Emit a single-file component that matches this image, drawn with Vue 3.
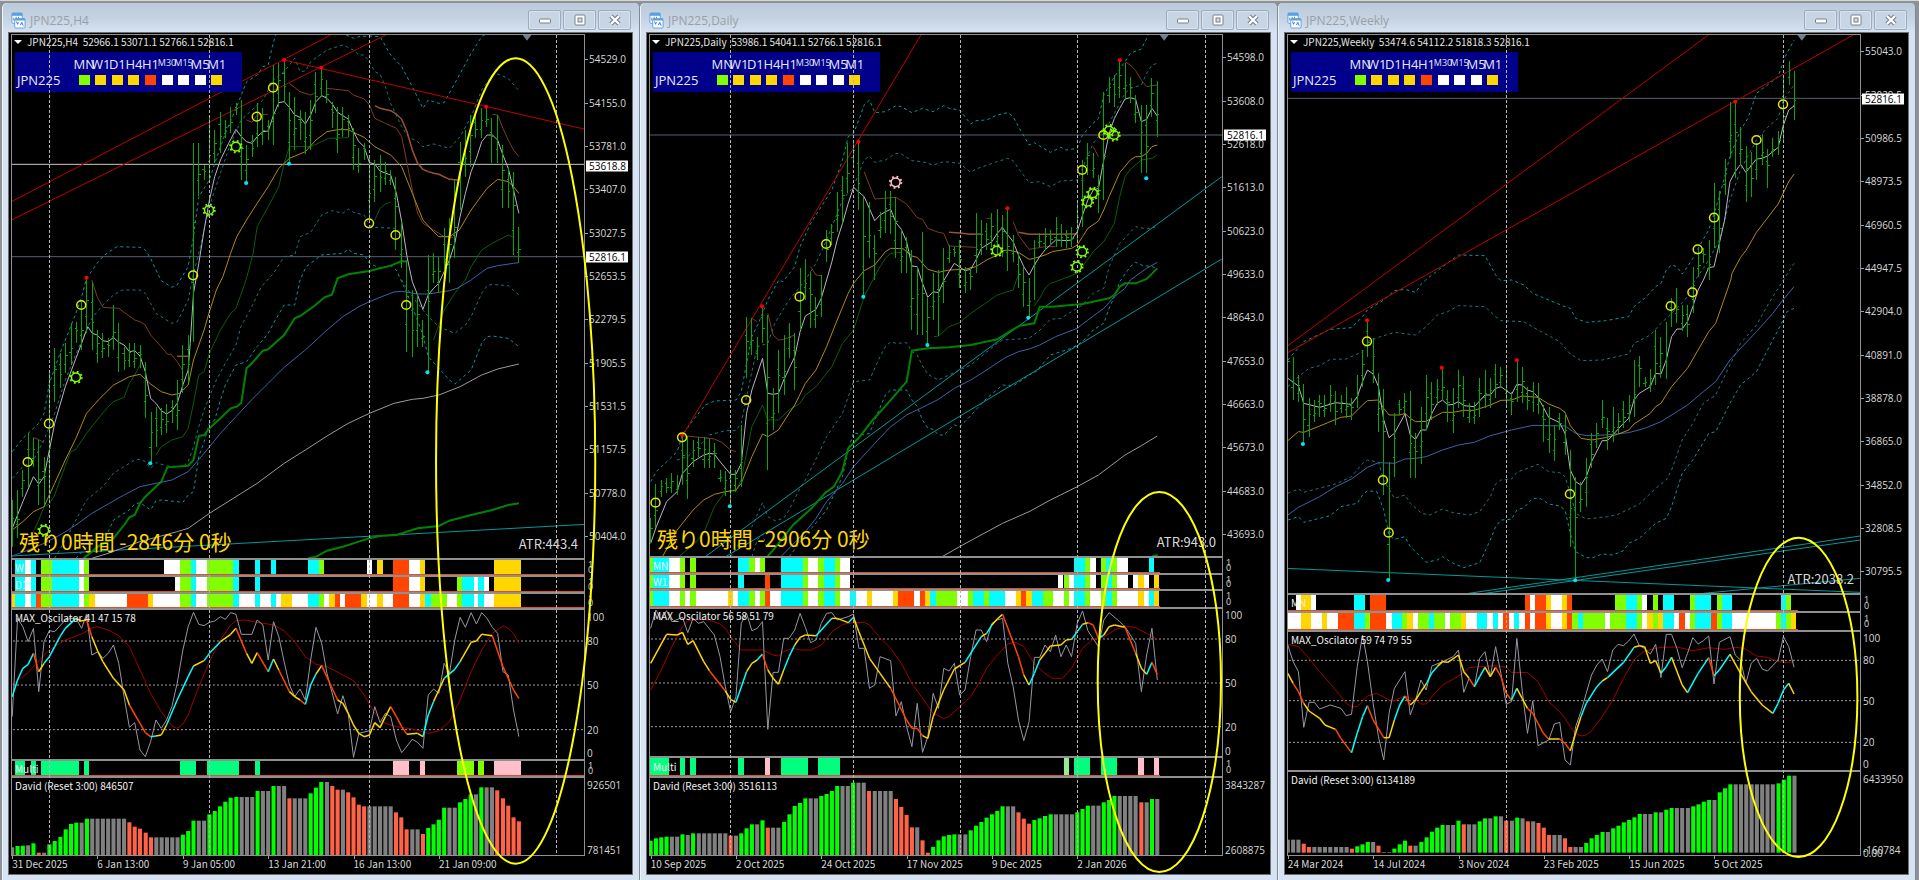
<script setup>
// Charts share one canvas space: every window is 1526 x 2523 units, panes are horizontal bands of it.
const W = 1526
const TOP = 99
const STEP = 13.06
const INK = { c: '#00ffff', w: '#ffffff', l: '#7fff00', y: '#ffd700', o: '#ff4500', s: '#00ff7f', p: '#ffc0cb', e: '#90ee90' }
const BARS = { g: '#808080', G: '#00ff00', r: '#ff6347' }
const LINE = {
  fast: ['#b9b5c6', 1, ''], slow: ['#b08a10', 1, ''], green: ['#0b5c0b', 1, ''], cloud: ['#008400', 2, ''],
  blue: ['#3f62a8', 1, ''], long: ['#9a98a2', 1, ''], brown: ['#7a3d20', 1, ''], rust: ['#9c5230', 1.5, ''],
  band: ['#009c9c', 1, '3 3'], inner: ['#177a78', 1, '3 3'], red: ['#c00000', 1, ''], teal: ['#009a9a', 1, '']
}

// "@n" moves the origin down by n units for the points that follow.
function pts(text) {
  let dy = 0
  const out = []
  for (const t of text.trim().split(/\s+/)) {
    if (t[0] === '@') { dy = Number(t.slice(1)); continue }
    const [x, y] = t.split(',').map(Number)
    out.push(x + ',' + (y + dy))
  }
  return out.join(' ')
}

function tinted(text) {
  let ink = 'y'
  let last = null
  const out = []
  for (const t of text.trim().split(/\s+/)) {
    if (t.length === 1) { ink = t; continue }
    const [x, y] = t.split(',').map(Number)
    const p = [x, y + 1620]
    if (last) out.push({ d: `M${last[0]} ${last[1]}L${p[0]} ${p[1]}`, color: INK[ink] })
    last = p
  }
  return out
}

function ohlc(x0, text) {
  return text.trim().split(/\s+/).map((t, i) => {
    const [h, l] = t.split('-').map(Number)
    const x = x0 + Math.round(i * STEP)
    const o = h + Math.round((l - h) * (i % 3 === 0 ? 0.3 : 0.7))
    const c = h + Math.round((l - h) * (i % 2 === 0 ? 0.4 : 0.6))
    return `M${x} ${h}V${l}M${x - 4} ${o}h4M${x} ${c}h5`
  }).join('')
}

function histogram(x0, base, text) {
  const out = []
  for (const t of text.trim().split(/\s+/)) {
    const [top, n] = t.slice(1).split('x').map(Number)
    for (let k = 0; k < (n || 1); k++) {
      out.push({ x: x0 - 5 + Math.round(out.length * STEP), y: top + 1620, h: base - top, color: BARS[t[0]] })
    }
  }
  return out
}

function strip(text) {
  return text.trim().split(/\s+/).map((t) => {
    const [a, b] = t.slice(0, -1).split('-').map(Number)
    return { x: a, w: b - a, color: INK[t.slice(-1)] }
  })
}

const marks = (text) => (text.trim() ? text.trim().split(/\s+/).map((t) => t.split(',').map(Number)) : [])

const headStrip = '37-62c 62-75w 75-88c 101-127l 127-193c 193-206w 206-218l '
const dayStrip = '345-398c 398-411l 411-437w 437-451l 451-477c 477-489l 489-515w '

const windows = [
  {
    id: 'h4', title: 'JPN225,H4', left: 22,
    quote: 'JPN225,H4  52966.1 53071.1 52766.1 52816.1',
    timer: '残り0時間 -2846分 0秒', timerY: 1622, atr: 'ATR:443.4', atrY: 1632,
    verticals: [121, 513, 905, 1363], ellipse: [1263, 1383, 195, 1208], pointer: 1291,
    prices: '54529.0 54155.0 53781.0 53407.0 53027.5 52653.5 52279.5 51905.5 51531.5 51157.5 50778.0 50404.0'.split(' ').map((t, i) => ({ t, y: 178 + i * 130 })),
    tags: [{ t: '53618.8', y: 497 }, { t: '52816.1', y: 771 }],
    levels: [{ y: 493, c: '#c8c8c8' }, { y: 770, c: '#56606c' }],
    dates: [[30, '31 Dec 2025'], [238, '6 Jan 13:00'], [448, '9 Jan 05:00'], [657, '13 Jan 21:00'], [866, '16 Jan 13:00'], [1075, '21 Jan 09:00']],
    bars: ohlc(30, '1500-1640 1470-1615 1410-1490 1300-1460 1315-1400 1320-1515 1370-1520 1115-1500 1045-1205 1060-1165 1030-1120 970-1095 965-1030 900-1050 835-1000 845-1050 990-1090 1000-1075 1015-1070 915-1050 970-1115 1040-1110 1028-1102 1030-1105 1035-1105 1085-1255 1235-1388 1220-1340 1225-1305 1212-1298 1200-1270 1140-1290 1035-1180 1005-1150 430-1025 430-587 495-540 355-540 390-490 335-460 360-415 320-400 310-345 300-540 435-545 405-470 310-440 325-435 360-420 195-435 190-320 182-310 275-490 290-450 330-420 335-462 300-450 215-340 205-290 240-310 305-385 320-460 320-412 345-410 385-510 445-520 430-480 470-655 480-605 465-575 485-555 510-555 530-750 665-805 780-1055 870-1070 880-1040 960-1040 765-1115 760-850 770-880 685-840 655-850 540-775 425-630 390-530 345-500 345-415 325-415 325-380 355-490 345-490 435-625 500-625 515-765 682-790'),
    lines: [
      ['band', '@840 30,515 56,475 95,430 108,400 121,310 147,220 173,140 186,100 199,55 212,-5 @0 238,790 252,770 265,757 287,740 343,742 356,750 369,775 382,810 395,842 421,862 434,855 461,800 474,710 487,590 513,540 526,490 552,400 580,320 604,245 630,225 644,200 657,195 665,150 675,105'],
      ['band', '@0 848,105 866,115 879,110 905,108 931,110 957,165 984,200 1010,260 1036,325 1049,300 1075,310 1088,308 1114,250 1154,160 1180,110 1187,105'],
      ['inner', '@840 30,595 56,560 82,540 108,480 134,400 160,300 190,210 225,115 252,75 278,45 300,30 343,30 356,40 382,100 421,130 434,125 447,95 461,60 474,-20 @0 487,760 513,620 526,570 565,430 591,360 617,330 644,300 670,240 696,215 722,175 735,215 748,213 761,185 801,150 840,135 866,150 879,165 892,165 905,185 918,215 931,222 944,260 957,310 984,380 1000,410 1023,425 1036,440 1062,432 1101,445 1127,410 1154,350 1180,270 1206,225 1219,222 1245,235 1271,272'],
      ['inner', '@840 134,835 160,780 186,720 212,660 252,620 278,580 304,560 330,540 343,538 356,545 369,565 382,548 410,558 448,560 461,545 474,500 487,440 500,390 513,350 530,300 552,250 578,195 590,140 617,80 640,20 @0 670,820 696,770 722,765 735,710 761,697 788,645 814,632 840,640 853,627 866,637 892,645 905,675 918,682 971,685'],
      ['band', '@840 186,835 220,790 265,755 278,720 317,690 330,672 343,668 369,690 382,662 395,660 448,667 461,645 474,635 487,530 500,485 513,430 526,420 540,360 552,315 578,255 604,245 630,200 657,160 670,130 696,75 722,75 735,0 @0 750,800 788,765 840,760 853,748 866,760 892,765 905,790 931,805 957,797 971,810 997,880 @840 1010,80 1036,165 1049,230 1075,265 1101,300 1114,312 1140,285 1154,270 1180,190 1193,170 1206,168 1245,175 1271,200'],
      ['inner', '@840 984,0 1010,50 1049,110 1075,140 1114,160 1140,135 1154,110 1180,40 1193,17 1206,13 1245,17 1271,45'],
      ['red', '28,605 810,105'], ['red', '28,660 945,105'], ['red', '696,180 1434,388'], ['teal', '28,1668 1434,1573'],
      ['green', '@840 82,755 95,720 108,680 121,672 134,645 147,600 173,515 186,508 212,460 238,420 265,380 278,365 304,352 317,310 330,285 343,255'],
      ['green', '@840 382,525 395,500 421,480 448,470 461,445 474,370 487,285 500,275 513,220 540,150 565,100 578,85 600,10 @0 605,830 620,760 630,680 657,620 683,560 696,490 709,440 748,440 761,440 788,425 805,415 853,413'],
      ['green', '918,660 931,625 944,612 957,606'],
      ['green', '@840 1062,180 1088,90 1114,40 1140,0 @0 1154,800 1180,750 1206,730 1245,705 1258,712'],
      ['cloud', '@840 205,835 240,800 278,775 304,735 317,712 330,705 343,670 356,650 395,605 410,562 461,557 474,540 487,468 500,465 513,445 540,415 565,385 580,380 591,368 604,265 617,250 644,212 657,208 696,165 722,115 735,108 770,78 795,52 813,44 827,-5 @0 853,823 905,813 957,797 984,783 997,785'],
      ['cloud', '@840 755,835 775,830 801,812 840,800 879,785 905,775 930,768 971,765 1023,745 1075,738 1101,722 1154,705 1206,690 1245,675 1271,670'],
      ['blue', '@840 30,828 69,810 108,790 147,765 186,735 225,700 265,672 304,645 343,620 382,610 421,600 461,575 500,520 540,460 578,410 620,355 657,310 696,262 748,210 801,150 840,110 879,80 905,65 935,50 965,36 984,34 1023,42 1049,42 1101,32 1120,25 1154,0 @0 1193,805 1219,797 1258,790 1271,788'],
      ['long', '@840 225,835 265,820 343,785 434,755 461,745 513,700 591,640 630,610 696,550 748,510 801,468 853,430 905,400 965,370 1010,358 1036,355 1075,345 1127,320 1180,285 1219,267 1271,252'],
      ['brown', '@840 225,0 238,50 252,82 291,85 330,120 343,125 356,135 369,165 395,200 410,222 421,225 434,245 447,270'],
      ['brown', '@840 82,472 108,487'], ['rust', '@840 434,229 461,229'], ['brown', '604,360 617,367 630,345 656,343'], ['brown', '709,250 735,275 761,285 774,278'],
      ['brown', '801,265 853,272 866,285 892,297 905,315 918,355 944,370 971,385 984,410 997,490 1010,570 1023,640 1036,670 1062,690 1088,710 1110,712'],
      ['brown', '1206,343 1219,345 1232,385 1245,420 1258,450 1271,470'],
      ['rust', '918,317 931,325 957,332 971,342 984,358 997,395 1010,450 1023,490 1036,508 1049,515 1062,520 1075,523 1101,538 1123,540'],
      ['slow', '@840 30,750 56,725 82,695 108,680 134,610 160,540 186,475 212,400 245,355 278,315 317,290 343,283 369,312 395,335 421,345 440,340 461,315 474,240 500,150 513,95 530,30 @0 546,830 565,760 580,710 604,660 630,610 657,560 683,505 709,475 748,455 774,420 801,395 827,389 853,389 866,397 892,412 918,440 957,465 984,500 1010,580 1036,660 1062,695 1075,710 1101,710 1125,690 1154,630 1193,565 1219,538 1245,545 1258,560 1271,580'],
      ['fast', '@840 30,745 56,665 82,590 95,612 108,590 121,510 134,430 160,320 186,235 200,190 215,140 226,160 238,165 252,182 265,185 278,172 291,187 304,195 317,215 330,212 343,228 356,275 369,355 382,370 395,392 408,402 421,392 434,370 448,315 461,270 466,190 474,40 @0 487,790 500,690 513,600 526,530 540,480 560,430 578,388 591,410 604,425 617,430 630,410 644,395 657,393 670,345 683,308 696,305 709,322 722,345 735,352 748,372 761,345 774,305 788,287 801,295 814,312 827,337 853,357 866,395 879,425 892,440 905,488 918,492 931,513 957,525 971,580 984,665 997,770 1010,845 @840 1023,45 1036,88 1049,45 1062,25 1075,10 @0 1088,815 1101,780 1114,730 1127,650 1140,580 1154,515 1167,475 1180,425 1193,405 1206,405 1219,420 1232,465 1245,505 1258,570 1271,640']
    ],
    rings: marks('669,263 629,350 904,670 969,705 473,826 199,915 995,915 120,1271 68,1386'),
    gears: marks('578,440 512,630 186,1132 108,1591'), pinkGears: [],
    highs: marks('696,180 787,203 1191,320 212,833'), lows: marks('708,491 603,549 368,1390 1047,1117'),
    panes: [
      { kind: 'main', px: 525 },
      { kind: 'strip', px: 17, label: 'W', cells: strip(headStrip + '402-441w 441-467l 467-480c 480-506w 506-572l 572-585c 625-637c 664-676c 755-781c 781-793l 898-911w 924-937y 963-1003o 1003-1029w 1029-1041y 1210-1276y') },
      { kind: 'strip', px: 17, label: 'D1', cells: strip(headStrip + '429-441w 441-467l 467-480c 480-506w 506-572l 572-585c 625-637c 963-1003o 1003-1029w 1029-1041y 1120-1132l 1132-1160c 1160-1172w 1172-1185c 1185-1198w 1210-1276y') },
      { kind: 'strip', px: 16, label: '', cells: strip('28-37y ' + headStrip + '88-101o 218-232y 232-311w 311-363o 363-375y 375-441w 441-467l 467-480c 480-506w 506-572l 572-585c 585-625w 625-637c 637-664w 664-676c 676-689w 689-715y 715-755w 755-781c 781-793l 793-807w 807-820y 820-833o 833-846w 846-885o 885-898y 898-924w 924-937y 937-963w 963-1003o 1003-1029w 1029-1041y 1041-1055c 1055-1094l 1094-1120w 1120-1132l 1132-1160c 1160-1172w 1172-1185c 1185-1210w 1210-1276y') },
      { kind: 'osc', px: 151, label: 'MAX_Oscilator 41 47 15 78', labelY: 1855, guides: [1923, 2055, 2189], axis: [['100', 1851], ['80', 1923], ['50', 2055], ['20', 2190], ['0', 2259]] },
      { kind: 'strip', px: 17, label: 'Multi', cells: strip('37-62s 75-88s 101-193s 206-218s 441-480s 506-585s 625-637s 963-1003p 1029-1041p 1120-1160l 1172-1185l 1210-1276p') },
      { kind: 'hist', px: 79, label: 'David (Reset 3:00) 846507', labelY: 2357, axis: [['926501', 2354], ['781451', 2551]] }
    ],
    noise: '@1620 30,530 43,235 56,260 69,305 82,265 95,455 108,305 121,272 134,275 160,240 173,235 186,235 200,265 212,222 225,345 240,335 252,355 265,340 278,315 291,370 304,470 317,562 330,548 343,630 356,650 369,605 382,540 395,565 408,540 421,500 434,430 448,330 461,260 474,217 487,253 500,257 513,247 526,243 540,230 552,238 565,218 578,223 591,283 617,283 630,240 644,255 657,360 670,245 683,290 696,365 709,435 722,470 735,447 748,480 761,360 774,262 788,310 801,400 827,522 840,467 853,520 866,652 879,580 905,572 918,500 931,548 944,520 957,530 971,600 984,638 1010,598 1023,607 1036,625 1049,465 1062,447 1075,460 1088,370 1101,400 1114,300 1127,232 1140,262 1154,218 1167,252 1180,218 1193,235 1206,262 1219,280 1232,395 1245,405 1258,510 1271,590',
    smooth: '@1620 30,433 69,398 95,362 121,330 160,300 199,283 225,264 238,260 265,270 291,287 317,320 343,390 369,460 395,515 421,558 434,565 448,553 461,525 487,440 513,365 540,300 565,255 578,242 600,240 630,247 670,255 696,272 722,305 748,350 774,373 801,380 840,405 866,422 892,465 918,520 944,550 971,560 1010,567 1049,580 1075,573 1101,545 1127,480 1154,395 1180,330 1206,280 1232,258 1245,265 1258,280 1271,310',
    signal: tinted('c 30,470 43,420 56,385 69,373 82,340 o 95,395 y 108,370 c 121,350 134,320 147,290 160,265 186,235 y 199,243 212,240 o 225,290 y 240,335 252,365 265,390 278,415 304,450 317,495 o 343,550 356,578 369,590 c 382,588 y 395,585 408,555 c 434,480 461,410 474,378 y 500,362 c 513,340 540,305 y 565,283 578,265 o 604,340 y 617,370 630,338 o 657,395 c 670,357 y 683,390 o 709,455 y 722,470 735,480 o 748,493 c 761,435 774,402 y 788,377 o 827,480 y 840,490 853,520 866,555 879,580 892,590 905,585 918,548 931,563 944,530 957,500 o 971,530 984,560 997,583 y 1023,580 1036,590 c 1049,525 1062,485 y 1075,450 1088,415 c 1114,388 1127,365 y 1154,307 1167,303 1180,283 1206,287 o 1232,380 1258,450 1271,475'),
    volume: histogram(30, 948, 'g922 G918 G917 g916 G910 r938 g938 G913 G903 G891 G868 G852 G848 g848 G836 g836x7 r847 r860 r866 r878 r892 g892x5 G884 G873 G842 g842x2 G823 G813 G799 G785 G773 G771 g771x3 G753 g753x2 G738 g738x2 r775 g775x3 G760 G743 G726 g726 r738 r749 g749 r757 r772 r794 r799 g799x5 r817 r832 r868 g868x2 r882 G864 G853 G839 G803 g803x2 G787 G777 G763 g763 G742 g742x2 r751 r775 r797 r832 r844')
  },
  {
    id: 'daily', title: 'JPN225,Daily', left: 17,
    quote: 'JPN225,Daily  53986.1 54041.1 52766.1 52816.1',
    timer: '残り0時間 -2906分 0秒', timerY: 1615, atr: 'ATR:943.0', atrY: 1627,
    verticals: [222, 523, 784, 1072, 1386], ellipse: [1272, 2046, 151, 570], pointer: 1284,
    prices: '54598.0 53608.0 52618.0 51613.0 50623.0 49633.0 48643.0 47653.0 46663.0 45673.0 44683.0 43693.0'.split(' ').map((t, i) => ({ t, y: 172 + i * 130 })),
    tags: [{ t: '52816.1', y: 406 }],
    levels: [{ y: 405, c: '#56606c' }],
    dates: [[26, '10 Sep 2025'], [235, '2 Oct 2025'], [444, '24 Oct 2025'], [653, '17 Nov 2025'], [862, '9 Dec 2025'], [1071, '2 Jan 2026']],
    bars: ohlc(26, '1555-1630 1452-1585 1440-1490 1435-1480 1420-1480 1425-1485 1305-1455 1308-1497 1320-1400 1310-1370 1312-1405 1318-1405 1330-1405 1410-1447 1412-1487 1400-1520 1410-1475 1275-1460 950-1135 955-1065 1010-1080 920-1030 945-1410 1165-1290 1050-1240 1005-1185 970-1075 1000-1170 805-990 778-900 815-985 890-985 825-950 690-785 672-735 575-695 528-670 430-580 420-495 430-630 590-890 605-775 705-840 635-715 573-700 573-702 590-775 690-820 710-820 750-990 800-1005 695-1005 895-1035 820-960 810-1008 745-910 735-790 740-770 720-865 800-880 800-870 640-820 660-765 670-750 640-740 628-765 645-770 628-812 705-785 760-865 800-920 835-950 720-900 700-740 683-750 690-735 650-740 672-740 690-745 680-740 605-720 480-680 428-525 458-535 525-640 275-600 232-310 225-320 180-295 188-300 230-310 285-370 315-520 315-520 235-350 242-410'),
    lines: [
      ['band', '@840 26,605 40,575 91,515 104,465 130,420 160,375 182,363 235,360 248,335 261,250 274,170 290,130 313,60 340,0 @0 350,845 379,800 392,740 418,670 444,620 470,570 496,480 510,410 523,400 536,360 549,315 562,300 575,338 601,335 627,317 640,320 666,338 692,325 718,335 744,317 757,325 783,330 810,372 823,362 849,360 875,345 901,338 914,350 927,380 953,435 966,428 1005,457 1031,442 1044,450 1071,445 1084,405 1110,370 1123,355 1136,285 1162,230 1188,185 1201,160 1228,147 1245,105'],
      ['inner', '@840 90,540 117,530 143,500 170,465 209,452 235,452 248,430 261,350 287,200 313,190 330,130 365,60 392,20 @0 405,840 431,790 457,720 496,600 523,560 549,480 562,468 575,487 601,480 627,460 640,462 666,482 692,485 718,495 744,485 783,490 810,517 823,507 875,485 901,475 914,482 927,505 953,548 979,545 1005,560 1031,543 1071,540 1110,430 1149,370 1188,280 1201,265 1228,255 1241,220 1254,195 1267,190'],
      ['inner', '@840 222,830 248,780 274,740 300,668 313,710 330,722 352,715 365,690 392,625 405,600 430,540 457,470 496,400 510,350 523,305 562,300 588,230 601,200 614,185 627,190 653,188 666,215 679,225 692,258 705,283 731,300 757,285 783,270 810,255 840,225 875,190 888,180 953,175 980,150 1005,118 1031,115 1057,95 1084,75 1097,55 1110,40 1136,25 @0 1149,800 1175,730 1214,680 1241,687 1267,680'],
      ['band', '@840 365,830 400,775 457,690 496,590 510,510 523,458 549,465 562,460 575,420 601,345 614,330 653,330 666,360 679,380 692,420 705,445 718,448 731,465 744,465 770,435 783,440 796,425 849,355 888,315 914,318 953,285 970,275 1005,225 1057,205 1084,185 1110,150 1136,130 1149,85 1162,50 @0 1175,845 1201,800 1214,787 1228,795 1254,800 1267,805'],
      ['inner', '@840 274,830 287,780 300,762 310,800'],
      ['red', '104,1307 688,105'], ['teal', '160,1670 1425,530'], ['teal', '210,1670 1425,777'],
      ['green', '@840 95,830 130,795 156,760 182,680 209,635 235,632 248,600 274,440 300,375 313,420 339,420 365,390 392,370 405,345 431,320 470,260 496,190 523,150 549,50 570,0 @0 588,800 601,775 614,760 640,757'],
      ['green', '@840 720,170 731,168 757,140 783,128 810,100 840,75 875,45 914,30 922,0 @0 930,820'],
      ['green', '@840 966,78 979,55 992,25 1005,10 1018,5 @0 1071,820 1084,800 1110,755 1136,725 1162,670 1175,590 1188,530 1201,508 1228,480 1254,475 1267,465'],
      ['cloud', '@840 312,830 340,790 375,735 420,685 455,637 475,620 495,575 510,505 535,475 570,420 600,380 653,305 666,212 705,205 757,202 810,195 875,178 905,155 930,137 966,130 979,80 1010,80 1057,75 1084,72 1149,55 @0 1162,885 1175,860 1188,850 1214,850 1241,837 1267,805'],
      ['cloud', '@840 1255,828 1268,826'],
      ['blue', '@840 345,830 405,755 431,715 457,665 496,610 523,560 549,525 575,490 614,440 653,405 692,382 731,358 770,325 810,300 849,270 896,232 927,215 953,207 979,195 1018,170 1071,145 1097,120 1136,85 1162,50 @0 1188,865 1201,840 1241,805 1267,787'],
      ['long', '@840 740,830 783,800 820,775 888,730 953,695 1005,660 1071,620 1123,585 1188,525 1228,497 1267,468'],
      ['brown', '@840 104,467 156,473 182,477 200,487 222,510 235,515'], ['brown', '@840 274,115 287,125'], ['brown', '@840 313,100 326,165 339,180 352,178 379,165'],
      ['brown', '418,800 431,825 444,827'], ['brown', '549,515 575,597 627,592 653,612 679,653 692,658 705,685 731,697 744,700 757,738 823,742'],
      ['brown', '849,655 860,655'], ['brown', '914,665 927,705 953,748 992,740 1018,740'], ['brown', '1110,440 1123,470'],
      ['brown', '1188,185 1201,195 1214,212 1228,240 1241,260 1254,257 1267,255'],
      ['rust', '757,697 783,699 810,703 836,702'], ['rust', '927,697 953,703 1005,703 1071,702'],
      ['slow', '@840 55,830 91,750 130,690 156,660 182,643 209,635 235,630 248,610 274,530 300,462 313,470 339,450 365,400 379,375 405,310 431,270 457,200 483,120 510,40 @0 523,850 549,812 575,795 601,755 614,745 644,746 666,768 679,772 705,808 731,817 757,810 796,808 823,800 849,780 875,765 888,752 901,750 927,757 953,778 966,775 992,765 1010,755 1057,745 1071,735 1084,710 1097,685 1123,663 1136,630 1149,590 1175,518 1201,480 1214,470 1228,470 1241,460 1254,440 1267,435'],
      ['fast', '@840 26,790 40,740 65,665 91,635 104,580 130,545 156,525 170,520 182,522 196,545 222,583 235,583 248,550 261,400 274,330 300,235 313,340 326,343 339,340 352,300 379,230 392,155 405,108 431,88 444,55 457,0 @0 470,785 483,720 496,670 510,610 523,562 549,590 575,662 588,645 601,635 614,628 627,668 640,688 653,725 666,798 679,800 692,850 705,892 718,875 731,878 744,842 757,815 770,790 796,812 810,808 823,780 836,745 862,725 875,700 888,683 901,705 914,725 927,765 940,800 953,825 966,795 979,770 992,750 1018,720 1044,722 1057,720 1071,695 1084,645 1097,600 1110,570 1123,565 1136,480 1149,400 1162,355 1175,325 1188,297 1201,293 1214,298 1228,365 1241,358 1254,325 1267,348']
    ],
    rings: marks('456,732 391,890 1135,405 1083,510 103,1312 260,1200 38,1508'),
    gears: marks('1149,392 1161,405 1109,580 1096,605 1083,755 1070,800 874,752'), pinkGears: marks('626,547'),
    highs: marks('535,425 900,625 1175,181 103,1305 299,919'), lows: marks('547,890 1240,535 704,1035 951,953 220,1519'),
    panes: [
      { kind: 'main', px: 523 },
      { kind: 'strip', px: 17, label: 'MN', cells: strip('22-32l 32-71c 71-97w 97-110l 123-136l 241-268c 268-281l 281-293w 293-306l ' + dayStrip + '1064-1090c 1090-1103l 1103-1116w 1129-1142l 1142-1155c 1155-1168l 1168-1195w 1247-1260c') },
      { kind: 'strip', px: 16, label: 'W1', cells: strip('22-32l 32-71c 71-97w 97-110l 123-136l 241-254c 306-318o ' + dayStrip + '1025-1037w 1038-1051l 1051-1064w 1064-1090c 1090-1103l 1103-1116w 1129-1142l 1142-1155c 1155-1168l 1168-1195w 1208-1221w 1221-1234y 1234-1247w 1260-1272y') },
      { kind: 'strip', px: 18, label: '', cells: strip('22-32l 32-71c 71-97w 97-110l 110-123w 123-136l 136-216w 216-228y 228-241w 241-268c 268-281l 281-293w 293-306l 306-318o 318-345w ' + dayStrip + '515-528c 528-555w 555-568y 568-620w 620-633y 633-672o 672-685w 685-698o 698-711y 711-725c 725-777l 777-803w 803-816l 816-843c 843-855l 855-894c 894-920w 920-933y 933-946o 946-959y 959-986c 986-1012l 1012-1038w 1038-1051l 1051-1064w 1064-1090c 1090-1103l 1103-1129w 1129-1142l 1142-1155c 1155-1168l 1168-1221w 1221-1234y 1234-1247w 1247-1260c 1260-1272y') },
      { kind: 'osc', px: 149, label: 'MAX_Oscilator 56 58 51 79', labelY: 1849, guides: [1917, 2049, 2180], axis: [['100', 1845], ['80', 1917], ['50', 2050], ['20', 2181], ['0', 2252]] },
      { kind: 'strip', px: 20, label: 'Multi', cells: strip('22-71s 97-110s 123-136s 241-254s 306-318p 345-411s 437-489s 1038-1051e 1064-1103s 1129-1168s 1221-1234p 1260-1272p') },
      { kind: 'hist', px: 79, label: 'David (Reset 3:00) 3516113', labelY: 2359, axis: [['3843287', 2355], ['2608875', 2551]] }
    ],
    noise: '@1620 26,265 39,210 52,240 65,212 78,245 104,232 117,278 130,235 143,250 156,245 182,285 196,350 209,440 222,515 235,470 248,250 261,220 274,272 287,265 300,245 313,568 326,397 339,397 352,295 365,295 379,270 392,220 405,262 418,308 431,300 444,250 457,220 470,218 483,240 510,230 523,222 536,325 549,325 562,445 575,435 588,350 614,362 627,528 640,485 653,560 666,620 679,490 692,637 705,590 718,460 731,505 744,385 757,393 770,370 783,465 796,450 810,350 823,270 836,270 849,305 862,250 875,240 888,235 901,370 914,440 927,540 940,602 953,545 966,352 979,352 992,315 1005,335 1018,285 1031,350 1044,315 1057,350 1071,250 1084,213 1097,272 1123,320 1136,240 1149,218 1175,245 1188,260 1214,310 1228,455 1241,345 1254,265 1267,420',
    smooth: '@1620 26,450 52,390 78,320 104,260 117,242 143,238 170,240 196,252 209,265 222,290 248,330 300,330 326,345 339,348 352,335 375,325 392,330 418,330 444,315 470,275 496,253 523,248 549,247 562,255 588,293 614,325 640,370 666,430 692,475 718,520 744,535 757,530 783,500 810,470 830,430 849,385 875,345 901,312 920,307 940,320 966,372 992,400 1010,415 1035,415 1057,385 1084,325 1110,297 1136,292 1162,270 1188,258 1214,263 1241,280 1267,298',
    signal: tinted('y 26,370 65,283 91,285 104,277 117,313 130,302 156,365 170,392 o 209,453 y 222,478 235,487 c 261,395 y 274,370 287,360 c 300,342 o 313,390 y 326,415 339,433 352,390 c 365,350 379,315 y 392,292 405,285 431,287 c 444,270 470,235 y 483,235 510,248 c 523,232 y 536,275 562,355 588,400 614,445 o 653,540 666,565 679,565 692,587 y 705,595 718,530 744,450 770,387 796,367 c 836,290 y 849,280 c 862,255 y 875,237 888,223 o 901,265 927,350 940,405 y 953,435 c 966,400 979,360 y 992,340 1005,318 1031,315 1044,300 1057,298 c 1084,253 y 1097,248 o 1110,255 1123,295 c 1136,285 y 1149,260 1162,255 1188,262 o 1214,340 y 1228,385 1241,403 c 1254,367 o 1267,403'),
    volume: histogram(26, 948, 'G902 G895 G892 G890 g890x2 G883 g885 G880 g880x6 r887 g887 G880 G865 G853 g853 G841 r863 g863x2 G846 G823 G798 G789 G775 g775x2 G768 G762 G753 G738 g738x2 G728 g728x2 r753 g753x4 r777 r801 r825 r862 g862 r901 r938 G921 G901 G889 G885 G883 g883x2 G871 G857 G846 G833 G823 G813 G799 g799x2 r817 r836 r851 G840 G835 G828 G823 g823x4 G817 G807 G797 g797x2 G787 G780 G768 g768x4 r787 g787 G777 g777')
  },
  {
    id: 'weekly', title: 'JPN225,Weekly', left: 15,
    quote: 'JPN225,Weekly  53474.6 54112.2 51818.3 52816.1',
    timer: '', timerY: 0, atr: 'ATR:2038.2', atrY: 1738,
    verticals: [557, 1236], ellipse: [1273, 2092, 144, 479], pointer: 1281,
    prices: '55043.0 53029.5 50986.5 48973.5 46960.5 44947.5 42904.0 40891.0 38878.0 36865.0 34852.0 32808.5 30795.5'.split(' ').map((t, i) => ({ t, y: 154 + i * 130 })),
    tags: [{ t: '52816.1', y: 296 }],
    levels: [{ y: 295, c: '#56606c' }],
    dates: [[22, '24 Mar 2024'], [231, '14 Jul 2024'], [440, '3 Nov 2024'], [649, '23 Feb 2025'], [858, '15 Jun 2025'], [1066, '5 Oct 2025']],
    bars: ohlc(22, '1060-1120 1072-1200 1125-1205 1152-1330 1195-1312 1200-1265 1185-1250 1185-1252 1155-1235 1172-1275 1185-1240 1162-1255 1195-1260 1125-1225 1050-1160 960-1070 1015-1150 1120-1295 1168-1485 1385-1738 1240-1430 1200-1245 1178-1240 1172-1435 1300-1435 1220-1392 1125-1290 1145-1260 1138-1215 1105-1200 1170-1265 1165-1300 1110-1225 1128-1250 1210-1268 1205-1272 1135-1250 1110-1225 1135-1225 1092-1195 1100-1165 1103-1215 1175-1245 1082-1205 1100-1210 1160-1230 1145-1235 1150-1242 1215-1325 1220-1360 1275-1382 1240-1290 1240-1365 1350-1640 1430-1738 1445-1535 1375-1520 1300-1405 1270-1345 1200-1285 1255-1350 1220-1325 1240-1300 1202-1285 1185-1265 1080-1250 1068-1160 1130-1160 1108-1175 990-1155 1010-1135 965-1138 895-980 865-970 915-992 915-1010 802-940 745-830 745-790 720-840 548-745 572-760 478-585 305-475 305-535 380-495 437-605 455-590 430-540 403-495 448-565 415-470 393-465 230-430 183-255 212-360'),
    lines: [
      ['band', '@840 22,240 61,185 126,148 178,143 205,110 217,90 257,60 283,32 309,28 335,37 350,10 @0 375,825 401,800 440,765 505,767 531,825 544,842 570,840 600,855 622,880 @840 661,60 701,80 714,85 727,115 753,127 800,122 857,110 870,80 896,55 923,20 @0 936,850 949,810 962,795 975,800 988,822 1001,800 1014,775 1027,745 1053,690 1079,590 1105,470 1131,390 1149,355 1170,280 1197,255 1223,230 1240,170 1262,120'],
      ['inner', '@840 22,320 48,290 74,265 100,257 126,238 165,237 205,215 217,185 244,172 283,157 335,165 361,140 388,105 414,95 440,77 505,80 531,110 544,122 600,125 635,150 688,185 714,222 740,242 792,240 857,222 870,190 910,165 936,130 975,85 1001,50 1014,10 @0 1040,805 1053,780 1079,720 1105,600 1131,510 1170,420 1197,382 1223,355 1236,300 1262,255'],
      ['inner', '@840 22,640 48,627 61,637 139,612 178,590 205,550 217,540 244,547 257,600 283,655 309,645 322,670 350,700 370,705 401,687 427,698 466,705 492,695 518,650 531,612 544,600 570,597 583,577 635,553 661,575 688,578 701,590 714,640 727,700 753,717 805,710 831,703 883,672 923,625 949,600 962,570 988,480 1014,430 1040,370 1070,345 1105,255 1131,190 1170,135 1200,70 1236,0 1262,-50'],
      ['band', '@840 22,720 48,710 61,727 126,707 152,680 192,670 205,645 217,632 240,635 257,690 270,765 283,778 309,770 322,800 361,847 388,840 401,830 427,850 453,863 492,848 518,780 531,740 544,720 570,718 583,690 600,683 622,655 640,655 661,672 688,678 701,690 714,760 727,815 753,833 770,833 792,822 818,825 844,812 857,790 883,775 923,730 949,715 962,680 988,580 1014,540 1053,460 1070,455 1105,370 1131,315 1170,275 1197,210 1223,150 1245,95 1262,85'],
      ['red', '22,1037 1052,105'], ['red', '22,1058 1407,105'],
      ['teal', '15,1705 1424,1777'], ['teal', '465,1780 1424,1608'], ['teal', '505,1780 1424,1620'], ['teal', '1040,1780 1424,1735'],
      ['blue', '@840 22,705 48,682 100,650 139,620 178,597 217,562 244,548 283,550 309,537 335,535 361,530 401,510 440,495 479,487 518,467 570,450 622,436 701,438 727,460 753,467 800,465 857,458 896,445 936,425 1001,375 1040,335 1070,305 1105,240 1131,205 1170,155 1210,100 1236,58 1262,20'],
      ['slow', '@840 22,482 48,455 61,457 100,438 152,412 178,408 205,375 217,362 244,360 257,385 270,405 296,405 309,400 322,415 335,425 361,424 401,397 427,397 453,391 479,391 518,375 544,361 570,360 596,348 635,352 661,372 688,385 701,397 714,437 740,475 766,480 800,473 830,463 857,450 870,432 910,400 923,380 936,370 962,320 1001,265 1027,210 1053,155 1070,130 1090,60 1107,0 @0 1110,820 1131,772 1144,752 1170,697 1223,612 1249,545 1262,522'],
      ['fast', '@840 22,295 48,318 61,370 100,382 139,368 178,373 192,350 205,305 217,270 231,282 244,320 257,420 270,473 283,460 309,402 322,465 335,478 348,450 361,450 375,400 388,370 401,360 414,375 427,373 440,365 453,377 479,380 505,345 518,345 531,325 544,320 570,343 583,313 596,315 609,330 622,335 635,352 661,412 688,428 701,460 714,570 727,605 740,615 753,590 766,545 792,482 805,482 818,465 844,430 857,415 870,360 883,340 910,320 923,280 936,282 949,240 962,170 975,147 988,147 1001,125 1014,80 1027,30 1040,0 @0 1053,803 1066,800 1079,730 1092,660 1105,545 1118,515 1131,493 1144,517 1170,477 1184,475 1197,468 1223,442 1236,375 1249,330 1262,318']
    ],
    rings: marks('1235,313 1170,420 1066,653 1026,748 1013,877 960,918 216,1024 255,1440 269,1598 713,1482'),
    gears: [], pinkGears: [],
    highs: marks('1118,305 216,961 399,1103 583,1081'), lows: marks('59,1332 268,1740 726,1741'),
    panes: [
      { kind: 'main', px: 560 },
      { kind: 'strip', px: 18, label: 'MN', cells: strip('41-54w 54-80y 80-92w 185-211c 224-262o 603-615o 615-628w 628-654o 654-667y 667-693w 693-707y 707-719o 824-850l 850-877c 877-889l 889-903w 916-929l 942-968c 1007-1020l 1020-1059c 1073-1085l 1085-1111c 1230-1242c 1242-1255l') },
      { kind: 'strip', px: 19, label: '', cells: strip('20-54w 54-80y 80-106w 106-119y 119-146w 146-185o 185-211c 211-224l 224-262o 262-277w 277-302c 302-315l 315-328y 328-341w 341-367l 367-380c 380-406l 406-419w 419-446l 446-458y 458-485w 485-511c 511-524w 524-537c 537-550w 550-563o 563-576w 576-589c 589-603w 603-615o 615-628w 628-654o 654-667y 667-693w 693-707y 707-719o 719-733l 733-746c 746-798l 798-811w 811-850l 850-877c 877-889l 889-903w 903-916y 916-929l 929-942y 942-968c 968-981w 981-994o 994-1007w 1007-1020l 1020-1059c 1059-1073o 1073-1085l 1085-1111c 1111-1217w 1217-1229l 1229-1242c 1242-1255l 1255-1268y') },
      { kind: 'osc', px: 140, label: 'MAX_Oscilator 59 74 79 55', labelY: 1919, guides: [1981, 2102, 2227], axis: [['100', 1915], ['80', 1981], ['50', 2103], ['20', 2227], ['0', 2291]] },
      { kind: 'hist', px: 85, label: 'David (Reset 3:00) 6134189', labelY: 2339, axis: [['6433950', 2336], ['-160784', 2550], ['0.00', 2558]] }
    ],
    noise: '@1620 22,315 35,365 48,395 61,562 74,487 87,487 100,507 126,495 152,505 165,527 178,523 192,380 205,285 217,365 231,490 244,590 257,660 270,520 283,445 309,395 322,525 335,480 348,420 361,450 375,378 401,365 427,350 440,330 453,457 466,415 479,440 492,355 505,335 518,410 531,320 544,400 557,493 570,485 583,295 596,450 609,580 622,483 635,617 661,600 675,552 688,547 701,660 714,675 727,560 740,515 753,460 766,405 779,375 792,357 805,395 818,330 831,313 844,317 857,303 870,282 883,317 896,325 910,342 923,313 936,413 949,283 962,283 975,325 988,383 1001,340 1014,293 1027,312 1040,302 1053,288 1066,432 1079,307 1105,290 1118,345 1131,360 1144,430 1157,370 1170,355 1184,387 1197,393 1223,360 1236,290 1249,320 1262,382',
    smooth: '@1620 22,313 48,320 74,355 100,395 139,450 165,490 178,500 192,500 217,468 240,460 270,480 283,482 309,468 335,480 348,492 361,492 375,470 401,435 440,408 466,383 492,380 531,377 557,382 570,397 609,398 635,425 661,485 688,515 701,535 714,560 727,580 740,588 753,585 766,573 792,530 818,480 844,415 870,360 883,345 896,333 936,322 975,321 1014,332 1053,323 1092,328 1118,322 1140,325 1170,348 1197,352 1223,365 1245,367 1262,365',
    signal: tinted('y 22,400 35,430 o 48,455 61,490 y 74,513 100,535 113,555 139,568 o 152,595 178,638 c 192,580 205,530 217,497 o 231,540 257,593 y 270,593 283,540 c 296,495 309,468 o 322,495 y 335,480 348,455 361,432 c 375,398 388,380 y 401,365 414,367 440,345 453,395 466,415 o 479,440 c 492,410 505,382 y 518,410 531,382 o 544,410 557,460 570,480 c 583,445 y 596,475 609,505 o 622,520 635,550 648,580 661,597 y 688,597 o 701,610 714,632 y 727,580 740,530 c 753,490 779,440 792,423 y 805,413 c 844,368 870,322 y 883,317 896,320 910,370 923,362 936,400 c 949,380 962,352 y 988,435 1001,458 c 1027,400 1053,353 o 1066,407 c 1079,390 1105,343 y 1131,400 1157,455 1184,495 1210,520 c 1223,490 1236,450 1249,430 y 1262,462'),
    volume: histogram(22, 938, 'g899x3 r911 r921 g921x7 r926 G919 G913 G906 g906 r917 r936 g936 G926 G913 G902 r917 g917 G906 G892 G875 G863 G855 g855x2 G842 r853 g853x2 G844 G835 g835 G829 g829 r842 g842 G833 g835 r844 g844 r849 r863 r885 g885x2 r895 r921 g921x2 G909 G895 G885 G876 g876 G865 G857 G847 G840 G832 G822 g822x2 G817 g817 G809 G804 g804x3 G799 G793 G785 G780 g780 G757 G745 G733 g733x8 G730 G719 G707 g707')
  }
]

// Stack the panes: each one knows where its band starts in the shared space.
for (const w of windows) {
  let y = TOP + 3
  for (const p of w.panes) {
    p.y = y
    p.h = p.px * 3
    y += p.h
  }
  w.plotX = w.left + 5
}
const plotW = 1406

const frames = [
  ['MN', '#7fff00'], ['W1', '#ffd700'], ['D1', '#ffd700'], ['H4', '#ffd700'], ['H1', '#ff4500'],
  ['M30', '#ffffff'], ['M15', '#ffffff'], ['M5', '#ffffff'], ['M1', '#ffd700']
]
const at = (pane, y) => ({ top: ((y - pane.y) / pane.h) * 100 + '%' })
const box = (w, p) => `${w.plotX} ${p.y} ${plotW} ${p.h}`
</script>

<template>
  <main class="desktop">
    <section v-for="w in windows" :key="w.id" class="window">
      <header class="titlebar">
        <svg class="app-icon" viewBox="0 0 16 18" aria-hidden="true">
          <rect x="1" y="1" width="11" height="11" rx="1" fill="#fff" stroke="#5aa0e0" />
          <rect x="1" y="1" width="11" height="3" fill="#5aa0e0" />
          <path d="M3 9V6M5.500 8V5M8 7V5" fill="none" stroke="#3f7fc8" />
          <rect x="4" y="7" width="11" height="10" rx="1" fill="#fff" stroke="#5aa0e0" />
          <rect x="4" y="7" width="11" height="2" fill="#5aa0e0" />
          <path d="M6 10l1 3 1-2M10 14l1.500-3 1.500 3.500" fill="none" stroke="#2f6fc0" />
        </svg>
        <h2>{{ w.title }}</h2>
        <div class="controls">
          <button type="button" aria-label="Minimize">
            <svg viewBox="0 0 14 14"><rect x="1.500" y="6" width="11" height="4" rx="1" fill="#fff" stroke="#7a8089" /></svg>
          </button>
          <button type="button" aria-label="Maximize">
            <svg viewBox="0 0 14 14"><rect x="2" y="2" width="10" height="10" rx="1" fill="#fff" stroke="#7a8089" /><rect x="5" y="5" width="4" height="4" fill="#cfdcea" stroke="#7a8089" /></svg>
          </button>
          <button type="button" aria-label="Close">
            <svg viewBox="0 0 14 14"><path d="M3 3l8 8M11 3l-8 8" stroke="#7a8089" stroke-width="4.500" /><path d="M3 3l8 8M11 3l-8 8" stroke="#fff" stroke-width="2.200" /></svg>
          </button>
        </div>
      </header>

      <div class="chart">
        <div v-for="(p, i) in w.panes" :key="i" class="pane" :style="{ flexGrow: p.px }">
          <div class="plot">
            <svg class="layer" :viewBox="box(w, p)" preserveAspectRatio="none">
              <g v-if="p.kind === 'main'">
                <polygon :points="`${w.pointer - 12},103 ${w.pointer + 12},103 ${w.pointer},122`" fill="#6f8096" />
                <path v-for="l in w.levels" :key="l.y" :d="`M${w.left} ${l.y}h1500`" :stroke="l.c" />
                <polyline v-for="(l, k) in w.lines" :key="k" :points="pts(l[1])" :stroke="LINE[l[0]][0]" :stroke-width="LINE[l[0]][1]" :stroke-dasharray="LINE[l[0]][2]" />
                <path class="crisp" :d="w.bars" stroke="#00aa00" />
                <ellipse v-for="(c, k) in w.highs" :key="'h' + k" :cx="c[0]" :cy="c[1]" rx="5" ry="6" fill="#ff0000" />
                <ellipse v-for="(c, k) in w.lows" :key="'l' + k" :cx="c[0]" :cy="c[1]" rx="5" ry="6" fill="#00e5ff" />
                <ellipse v-for="(c, k) in w.rings" :key="'r' + k" :cx="c[0]" :cy="c[1]" rx="11" ry="13" stroke="#e8e800" stroke-width="1.500" />
                <g v-for="(c, k) in w.gears" :key="'g' + k" stroke="#7fff00">
                  <ellipse :cx="c[0]" :cy="c[1]" rx="11" ry="13" stroke-width="1.500" />
                  <ellipse :cx="c[0]" :cy="c[1]" rx="14" ry="17" stroke-width="2" stroke-dasharray="1.800 2.700" />
                </g>
                <g v-for="(c, k) in w.pinkGears" :key="'p' + k" stroke="#ffc0cb">
                  <ellipse :cx="c[0]" :cy="c[1]" rx="11" ry="13" stroke-width="1.500" />
                  <ellipse :cx="c[0]" :cy="c[1]" rx="14" ry="17" stroke-width="2" stroke-dasharray="1.800 2.700" />
                </g>
              </g>
              <g v-else-if="p.kind === 'strip'" class="crisp">
                <rect v-for="(c, k) in p.cells" :key="k" :x="c.x" :y="p.y" :width="c.w" :height="p.h - 6" :fill="c.color" />
                <rect :x="w.left" :y="p.y + p.h - 6" :width="w.id === 'h4' ? 1430 : 1256" height="3" fill="#e0502c" />
              </g>
              <g v-else-if="p.kind === 'osc'">
                <path v-for="g in p.guides" :key="g" :d="`M${w.left} ${g}h1500`" stroke="#a0a0a0" stroke-dasharray="2 2" />
                <polyline :points="pts(w.smooth)" stroke="#a00000" />
                <polyline :points="pts(w.noise)" stroke="#9896a4" />
                <path v-for="(s, k) in w.signal" :key="k" :d="s.d" :stroke="s.color" stroke-width="1.500" />
              </g>
              <g v-else>
                <rect v-for="(b, k) in w.volume" :key="k" :x="b.x" :y="b.y" width="10" :height="b.h" :fill="b.color" />
              </g>
              <rect class="crisp" :x="w.plotX" :y="p.y" :width="plotW" :height="p.h" stroke="#909090" stroke-width="2" />
            </svg>

            <template v-if="p.kind === 'main'">
              <div class="quote"><span class="caret"></span>{{ w.quote }}</div>
              <table class="matrix">
                <tbody>
                  <tr>
                    <td class="pair"></td>
                    <th v-for="f in frames" :key="f[0]" scope="col"><div :class="{ tiny: f[0].length > 2 }">{{ f[0] }}</div></th>
                    <td></td>
                  </tr>
                  <tr>
                    <th class="pair" scope="row">JPN225</th>
                    <td v-for="f in frames" :key="f[0]"><div><i :style="{ background: f[1] }"></i></div></td>
                    <td></td>
                  </tr>
                </tbody>
              </table>
              <div v-if="w.timer" class="timer" :style="at(p, w.timerY)">{{ w.timer }}</div>
              <div class="atr" :style="at(p, w.atrY)">{{ w.atr }}</div>
            </template>
            <div v-else class="caption" :style="p.labelY ? at(p, p.labelY) : { top: '50%' }">{{ p.label }}</div>
          </div>

          <div class="axis">
            <template v-if="p.kind === 'main'">
              <span v-for="r in w.prices" :key="r.t" class="price" :style="at(p, r.y)">{{ r.t }}</span>
              <span v-for="r in w.tags" :key="r.t" class="tag" :style="at(p, r.y)">{{ r.t }}</span>
            </template>
            <template v-else-if="p.kind === 'strip'">
              <span class="bit" :style="{ top: '36%' }">1</span>
              <span class="bit" :style="{ top: '64%' }">0</span>
            </template>
            <template v-else>
              <span v-for="a in p.axis" :key="a[0]" class="value" :style="at(p, a[1])">{{ a[0] }}</span>
            </template>
          </div>
        </div>

        <div class="dates">
          <span v-for="d in w.dates" :key="d[1]" :style="{ left: ((d[0] - w.left) / W) * 100 + '%' }">{{ d[1] }}</span>
        </div>

        <svg class="layer overlay" :viewBox="`${w.left} ${TOP} ${W} 2523`" preserveAspectRatio="none">
          <path v-for="x in w.verticals" :key="x" class="crisp" :d="`M${x} 105V2567`" stroke="#b4b4b4" stroke-dasharray="3 2" />
          <ellipse :cx="w.ellipse[0]" :cy="w.ellipse[1]" :rx="w.ellipse[2]" :ry="w.ellipse[3]" stroke="#ffff00" stroke-width="2" />
        </svg>
      </div>
    </section>
  </main>
</template>

<style>
html, body { margin: 0; background: #d7e3f3; }
</style>

<style scoped>
.desktop {
  display: grid;
  grid-template-columns: repeat(3, minmax(0, 1fr));
  height: 100vh;
  box-sizing: border-box;
  padding: 2px 3px 0 2px;
  background: #8c9298;
  border-top: 1px solid #d6dad2;
  font-family: "Open Sans", "Noto Sans", "Noto Sans CJK JP", sans-serif;
  overflow: hidden;
}
.window {
  display: flex;
  flex-direction: column;
  min-width: 0;
  box-sizing: border-box;
  padding: 0 7px 6px 6px;
  background: #d7e3f3;
  border-left: 1px solid #eef4fa;
  border-right: 1px solid #7c8a98;
  border-radius: 5px 5px 0 0;
}
.titlebar {
  display: flex;
  align-items: center;
  height: 30px;
  margin: 0 -7px 0 -6px;
  padding: 4px 8px 0;
  box-sizing: border-box;
  background: linear-gradient(#bccbdb, #c4d2e1 50%, #d7e3f3);
  border-radius: 5px 5px 0 0;
}
.app-icon { width: 15px; height: 17px; margin-right: 4px; }
h2 { margin: 0; padding-top: 2px; font-size: 12px; line-height: 16px; font-weight: 400; color: #9b9fa5; }
.controls { display: flex; gap: 2px; margin-left: auto; }
button {
  display: flex;
  align-items: center;
  justify-content: center;
  width: 33px;
  height: 20px;
  padding: 0;
  border: 1px solid #9dabba;
  border-radius: 2px;
  background: #c8d5e4;
  box-shadow: inset 0 0 0 1px #d8e3ef;
}
button svg { width: 14px; height: 14px; fill: none; }

.chart {
  position: relative;
  display: flex;
  flex-direction: column;
  flex: 1;
  min-height: 0;
  box-sizing: border-box;
  padding-top: 1px;
  background: #000;
  box-shadow: 0 0 0 1px #6c7074;
  color: #d8d8d8;
  font-size: 10px;
  line-height: 12px;
}
.pane { display: flex; flex-basis: 0; min-height: 0; padding-left: 2px; }
.plot { position: relative; flex: 1; min-width: 0; }
.axis { position: relative; width: 47px; }
.layer { position: absolute; left: 0; top: 0; width: 100%; height: 100%; fill: none; }
.layer * { vector-effect: non-scaling-stroke; }
.overlay { pointer-events: none; }
.crisp { shape-rendering: crispEdges; }

.quote, .caption, .dates { font-family: "Noto Sans CJK JP", "Noto Sans", sans-serif; }
.quote {
  position: relative;
  display: flex;
  align-items: center;
  padding: 2px 0 0 3px;
  white-space: pre;
  color: #e4e4e4;
}
.caret {
  margin-right: 5px;
  border: 4px solid transparent;
  border-top: 4px solid #fff;
  border-bottom: 0;
}
.matrix {
  position: relative;
  width: 227px;
  height: 40px;
  margin: 4px 0 0 4px;
  border-collapse: collapse;
  table-layout: fixed;
  background: #00008b;
  color: #e8e8f4;
  font-size: 13px;
  line-height: 16px;
}
.matrix tr { height: 20px; }
.matrix th, .matrix td { padding: 0; font-weight: 400; vertical-align: top; }
.matrix .pair { width: 59px; padding-left: 2px; text-align: left; }
.matrix td:last-child { width: 17px; }
.matrix div { display: flex; justify-content: center; height: 16px; align-items: center; }
.matrix tr:first-child div { padding-top: 4px; white-space: nowrap; }
.matrix .tiny { font-size: 9px; align-items: flex-start; line-height: 13px; }
.matrix i { flex: none; width: 11px; height: 10px; }
.timer, .atr, .caption { position: absolute; transform: translateY(-50%); white-space: pre; }
.timer {
  left: 8px;
  color: #ffd700;
  font-family: "Noto Sans CJK JP", sans-serif;
  font-size: 21px;
  line-height: 24px;
}
.atr { right: 7px; font-family: "Noto Sans CJK JP", "Noto Sans", sans-serif; font-size: 13px; line-height: 16px; }
.caption { left: 4px; color: #f0f0f0; }

.axis span { position: absolute; transform: translateY(-50%); }
.price { left: 4px; }
.price::before { content: ""; position: absolute; left: -4px; top: 6px; width: 3px; border-top: 1px solid #a0a0a0; }
.axis .tag { left: 1px; padding: 0 0 0 3px; width: 39px; background: #fff; color: #000; line-height: 11px; z-index: 1; }
.value { left: 2px; }
.bit { left: 3px; font-size: 9px; }
.dates { position: relative; height: 18px; }
.dates span { position: absolute; top: 2px; white-space: nowrap; }
.dates span::before { content: ""; position: absolute; left: 0; top: -2px; height: 3px; border-left: 1px solid #a0a0a0; }
</style>
